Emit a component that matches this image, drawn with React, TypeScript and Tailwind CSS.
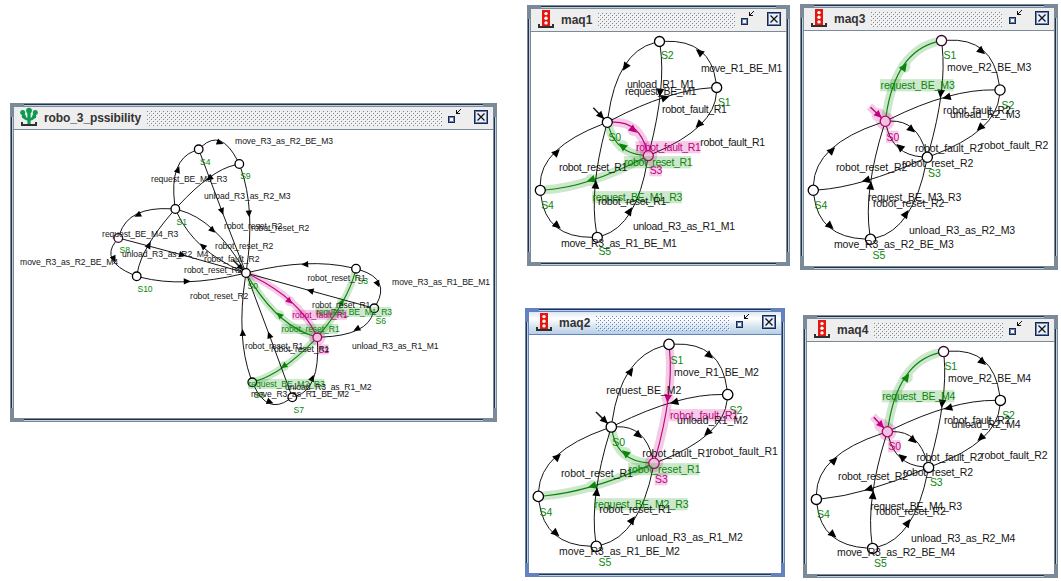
import React from "react";

type Tone = "plain" | "green" | "pink";
type Pt = [number, number];
type Edge = [from: string, to: string, midX: number, midY: number, tone?: Tone];
type Label = [text: string, x: number, y: number, tone?: Tone, width?: number];

interface Diagram {
  nodes: Record<string, Pt>;
  edges: Edge[];
  names: Label[];
  labels: Label[];
  tail: Pt;
  initial: string;
  initialTone?: Tone;
  nodeTones?: Record<string, "pink" | "dark">;
  size: number;
  tracking: number;
  radius: number;
}

const INK = { plain: "#161616", green: "#0a860a", pink: "#c4007f" };
const HAZE = { plain: "none", green: "#0b8a0b", pink: "#c8008c" };

function Arrow({ x, y, angle, tone, k }: { x: number; y: number; angle: number; tone: Tone; k: number }) {
  return (
    <path
      d={`M${3.4 * k} 0L${-3 * k} ${3 * k}L${-3 * k} ${-3 * k}Z`}
      fill={tone === "plain" ? "#000000" : INK[tone]}
      transform={`translate(${x} ${y}) rotate(${angle})`}
    />
  );
}

function trim(p: Pt, c: Pt, r: number): Pt {
  const d = Math.hypot(c[0] - p[0], c[1] - p[1]) || 1;
  return [p[0] + ((c[0] - p[0]) * r) / d, p[1] + ((c[1] - p[1]) * r) / d];
}

function Automaton({ d, view }: { d: Diagram; view: string }) {
  const k = d.size / 10.3;
  const curves = d.edges.map(([a, b, mx, my, tone = "plain"]) => {
    const s = d.nodes[a];
    const e = d.nodes[b];
    const c: Pt = [2 * mx - (s[0] + e[0]) / 2, 2 * my - (s[1] + e[1]) / 2];
    const s2 = trim(s, c, d.radius);
    const e2 = trim(e, c, d.radius);
    return {
      path: `M${s2[0]} ${s2[1]}Q${c[0]} ${c[1]} ${e2[0]} ${e2[1]}`,
      angle: (Math.atan2(e[1] - s[1], e[0] - s[0]) * 180) / Math.PI,
      mx,
      my,
      tone: tone as Tone,
    };
  });
  const home = d.nodes[d.initial];
  const tip = trim(home, d.tail, d.radius);
  const headAt = trim(home, d.tail, d.radius + 3.8 * k);
  const initTone = d.initialTone ?? "plain";
  const initAngle = (Math.atan2(home[1] - d.tail[1], home[0] - d.tail[0]) * 180) / Math.PI;

  const hazeBox = ([text, x, y, tone, w]: Label, i: number) =>
    tone && w ? (
      <rect key={text + i} x={x} y={y - 9.7 * k} width={w} height={12 * k} fill={HAZE[tone]} opacity={0.2} />
    ) : null;
  const word = ([text, x, y, tone = "plain"]: Label, i: number) => (
    <text key={text + i} x={x + 0.5} y={y} fill={INK[tone]}>
      {text}
    </text>
  );

  return (
    <svg
      viewBox={view}
      className="block h-full w-full"
      fontFamily="'Liberation Sans', Arial, sans-serif"
      fontSize={d.size}
      letterSpacing={d.tracking}
    >
      {(["green", "pink"] as const).map((tone) => (
        <g key={tone} opacity={0.2} stroke={HAZE[tone]} fill="none" strokeWidth={8.6 * k}>
          {curves
            .filter((c) => c.tone === tone)
            .map((c, i) => (
              <g key={i}>
                <path d={c.path} />
                <circle cx={c.mx} cy={c.my} r={6 * k} fill={HAZE[tone]} stroke="none" />
              </g>
            ))}
          {initTone === tone && (
            <>
              <path d={`M${d.tail[0] - 1} ${d.tail[1] - 1}L${tip[0]} ${tip[1]}`} strokeWidth={8} />
              <circle cx={headAt[0]} cy={headAt[1]} r={7} fill={HAZE[tone]} stroke="none" />
            </>
          )}
          {tone === "pink" &&
            Object.entries(d.nodeTones ?? {})
              .filter(([, t]) => t === "pink")
              .map(([n]) => (
                <circle key={n} cx={d.nodes[n][0]} cy={d.nodes[n][1]} r={d.radius + 4} fill={HAZE.pink} stroke="none" />
              ))}
        </g>
      ))}
      {curves.map((c, i) => (
        <g key={i}>
          <path d={c.path} fill="none" stroke={INK[c.tone]} strokeWidth={c.tone === "plain" ? 1 : 1.15} />
          <Arrow x={c.mx} y={c.my} angle={c.angle} tone={c.tone} k={k * 1.28} />
        </g>
      ))}
      <path d={`M${d.tail[0]} ${d.tail[1]}L${tip[0]} ${tip[1]}`} stroke={INK[initTone]} strokeWidth={1.5} />
      <Arrow x={headAt[0]} y={headAt[1]} angle={initAngle} tone={initTone} k={k * 1.2} />
      {Object.entries(d.nodes).map(([n, p]) => {
        const t = d.nodeTones?.[n];
        return (
          <circle
            key={n}
            cx={p[0]}
            cy={p[1]}
            r={d.radius}
            fill={t === "pink" ? "#eec3dd" : "#ffffff"}
            stroke={t === "pink" ? "#b4006f" : t === "dark" ? "#3a0a2c" : "#000000"}
            strokeWidth={1.3}
          />
        );
      })}
      {d.names.map(hazeBox)}
      {d.labels.map(hazeBox)}
      {d.names.map(([t, x, y, tone = "green", w], i) => word([t, x, y, tone, w], i))}
      {d.labels.map(word)}
    </svg>
  );
}

const robo: Diagram = {
  size: 8.6,
  tracking: -0.08,
  radius: 4.3,
  tail: [233, 260],
  initial: "S0",
  nodeTones: { S2: "pink", S8: "dark" },
  nodes: {
    S4: [198.7, 149.3], S9: [239.3, 164], S1: [175.3, 209], S8: [118.3, 238], S10: [136.7, 276.3],
    S0: [246, 273], S3: [356, 268.7], S6: [374.3, 308.3], S2: [317.3, 337.3], S5: [252.3, 382.3], S7: [292.3, 397.3],
  },
  edges: [
    ["S1", "S4", 178, 169.7], ["S4", "S9", 220, 142.7], ["S9", "S0", 249, 213.7], ["S4", "S0", 222, 211.3],
    ["S9", "S1", 209.3, 178.3], ["S1", "S8", 137.7, 215], ["S8", "S10", 114, 259], ["S10", "S1", 149, 245],
    ["S8", "S0", 182.3, 255], ["S10", "S0", 187, 281.3], ["S1", "S0", 212.7, 230.3], ["S0", "S1", 202.7, 246],
    ["S3", "S0", 305, 264.3], ["S3", "S6", 377.7, 284], ["S6", "S0", 310.3, 290.7], ["S6", "S2", 356.7, 329],
    ["S2", "S3", 342, 302, "green"], ["S0", "S2", 289.7, 301.3, "pink"], ["S2", "S0", 279.3, 315, "green"],
    ["S2", "S5", 283.7, 366.3, "green"], ["S5", "S0", 242.7, 332.7], ["S7", "S0", 269.3, 335],
    ["S5", "S7", 270, 402], ["S7", "S2", 312.3, 378],
  ],
  names: [
    ["S4", 199.5, 165], ["S9", 239.7, 179], ["S1", 176, 225], ["S8", 119, 253], ["S10", 137, 292], ["S0", 247, 289],
    ["S3", 357, 284], ["S6", 375, 324], ["S2", 318, 352.5, "pink", 10.6], ["S5", 253.5, 398], ["S7", 293, 413],
  ],
  labels: [
    ["move_R3_as_R2_BE_M3", 234.6, 144], ["request_BE_M3_R3", 150.6, 182], ["unload_R3_as_R2_M3", 203.6, 199],
    ["robot_reset_R2", 223.6, 229], ["robot_reset_R2", 250.6, 231], ["robot_reset_R2", 214.6, 249],
    ["robot_fault_R2", 203.6, 262], ["robot_reset_R2", 183.6, 273], ["robot_reset_R2", 189.6, 299],
    ["move_R3_as_R2_BE_M4", 19.6, 265], ["request_BE_M4_R3", 101.6, 237], ["unload_R3_as_R2_M4", 121.6, 257],
    ["robot_reset_R1", 307, 281], ["move_R3_as_R1_BE_M1", 391.6, 285], ["robot_reset_R1", 311.6, 308],
    ["request_BE_M1_R3", 315.4, 315, "green", 75.4], ["robot_fault_R1", 291.8, 318, "pink", 55],
    ["robot_reset_R1", 281, 332, "green", 57], ["unload_R3_as_R1_M1", 351.6, 349], ["robot_reset_R1", 244.6, 349],
    ["robot_reset_R1", 270.6, 352], ["request_BE_M2_R3", 248, 387, "green", 76.4],
    ["unload_R3_as_R1_M2", 284.6, 390], ["move_R3_as_R1_BE_M2", 250.6, 397],
  ],
};

const maq1: Diagram = {
  size: 10.5,
  tracking: -0.31,
  radius: 5,
  tail: [593.3, 107.7],
  initial: "S0",
  nodeTones: { S3: "pink" },
  nodes: {
    S2: [659.5, 41.5], S1: [716.7, 87.5], S0: [607.3, 122.3], S3: [648.3, 155.7], S4: [540.3, 190.3], S5: [597.3, 237.3],
  },
  edges: [
    ["S2", "S0", 625.3, 67], ["S1", "S2", 699.3, 52], ["S1", "S3", 698.7, 124.7], ["S4", "S0", 556.7, 152.3],
    ["S0", "S1", 665.3, 97.5], ["S2", "S3", 660, 92.5], ["S0", "S3", 633.5, 130, "pink"],
    ["S3", "S0", 622.3, 146, "green"], ["S3", "S4", 591, 180, "green"], ["S4", "S5", 557.3, 225.7],
    ["S5", "S0", 595.7, 184.7], ["S5", "S3", 629.7, 211],
  ],
  names: [
    ["S2", 660.6, 59], ["S1", 717.6, 106], ["S0", 608, 141], ["S3", 649.3, 174, "pink", 12.5], ["S4", 540.8, 209],
    ["S5", 598, 255],
  ],
  labels: [
    ["unload_R1_M1", 626.5, 88], ["request_BE_M1", 624.6, 95], ["move_R1_BE_M1", 700.4, 72],
    ["robot_fault_R1", 661.6, 113], ["robot_fault_R1", 699.8, 146], ["robot_fault_R1", 635.6, 151, "pink", 65],
    ["robot_reset_R1", 558.6, 171], ["robot_reset_R1", 623.8, 166, "green", 67.2],
    ["request_BE_M1_R3", 592, 201, "green", 90], ["robot_reset_R1", 597.6, 205],
    ["unload_R3_as_R1_M1", 632.4, 230], ["move_R3_as_R1_BE_M1", 560.6, 247],
  ],
};

const maq3: Diagram = {
  size: 10.5,
  tracking: -0.08,
  radius: 5.1,
  tail: [870.5, 107.3],
  initial: "S0",
  initialTone: "pink",
  nodeTones: { S0: "pink", S1: "dark" },
  nodes: {
    S1: [941.5, 40.6], S2: [1000, 90], S0: [885.3, 121.3], S3: [927.3, 157.3], S4: [813.3, 190.3], S5: [870.5, 239.3],
  },
  edges: [
    ["S0", "S1", 904.3, 66.7, "green"], ["S1", "S2", 981.7, 51.3], ["S2", "S0", 946.7, 97.3], ["S2", "S3", 980, 127.7],
    ["S1", "S3", 940.7, 93.7], ["S0", "S3", 911.7, 129.7], ["S3", "S0", 899.7, 147], ["S3", "S4", 866, 180.3],
    ["S4", "S5", 830.3, 226], ["S4", "S0", 832, 150.3], ["S5", "S0", 870.7, 185.7], ["S5", "S3", 906, 213.7],
  ],
  names: [
    ["S1", 943, 59], ["S2", 1001, 109], ["S0", 886, 140.5, "pink", 12.5], ["S3", 927.6, 177], ["S4", 814, 209],
    ["S5", 872, 259],
  ],
  labels: [
    ["request_BE_M3", 880, 89, "green", 73.4], ["move_R2_BE_M3", 946.6, 71], ["robot_fault_R2", 942.6, 114],
    ["unload_R2_M3", 949.6, 118], ["robot_fault_R2", 914.4, 152], ["robot_fault_R2", 980, 149],
    ["robot_reset_R2", 901.4, 167], ["robot_reset_R2", 835.4, 171], ["request_BE_M3_R3", 867.4, 201],
    ["robot_reset_R2", 872.4, 207], ["unload_R3_as_R2_M3", 908.6, 234], ["move_R3_as_R2_BE_M3", 833.4, 248],
  ],
};

const maq2: Diagram = {
  size: 10.5,
  tracking: -0.03,
  radius: 5.2,
  tail: [596, 412],
  initial: "S0",
  nodeTones: { S3: "pink" },
  nodes: {
    S1: [669, 344.4], S2: [727.7, 394.6], S0: [611.3, 427], S3: [654, 463.3], S4: [538.3, 496.4], S5: [596.3, 546.4],
  },
  edges: [
    ["S0", "S1", 630.7, 371.3], ["S1", "S2", 709.7, 355.7], ["S2", "S0", 674.3, 402.3], ["S2", "S3", 707.3, 432.7],
    ["S1", "S3", 667.7, 398.3, "pink"], ["S0", "S3", 638.7, 435.3], ["S3", "S0", 625.3, 453, "green"],
    ["S3", "S4", 592.3, 486, "green"], ["S4", "S5", 556, 533.3], ["S4", "S0", 557.7, 456.7],
    ["S5", "S0", 596.7, 492], ["S5", "S3", 632.3, 520],
  ],
  names: [
    ["S1", 670, 364], ["S2", 729, 413.5], ["S0", 611.8, 446], ["S3", 654.6, 483, "pink", 12.8], ["S4", 539, 516],
    ["S5", 598, 566],
  ],
  labels: [
    ["move_R1_BE_M2", 673.6, 376], ["request_BE_M2", 605.8, 394], ["robot_fault_R1", 669.4, 419, "pink", 68],
    ["unload_R1_M2", 676.6, 424], ["robot_fault_R1", 641.8, 457], ["robot_fault_R1", 708.8, 455],
    ["robot_reset_R1", 560.4, 477], ["robot_reset_R1", 628, 473, "green", 71],
    ["request_BE_M2_R3", 594, 508, "green", 93.6], ["robot_reset_R1", 598.8, 513],
    ["unload_R3_as_R1_M2", 635.4, 541], ["move_R3_as_R1_BE_M2", 558.6, 555],
  ],
};

const maq4: Diagram = {
  size: 10.5,
  tracking: -0.19,
  radius: 5.1,
  tail: [873.8, 417.3],
  initial: "S0",
  initialTone: "pink",
  nodeTones: { S0: "pink", S1: "dark" },
  nodes: {
    S1: [943.6, 351.6], S2: [1000.4, 400.4], S0: [887.4, 431.7], S3: [928.6, 467.4], S4: [816.4, 499.4], S5: [872.6, 548.4],
  },
  edges: [
    ["S0", "S1", 906.7, 377.3, "green"], ["S1", "S2", 982.7, 362], ["S2", "S0", 948.3, 408], ["S2", "S3", 980.7, 438],
    ["S1", "S3", 942, 403.7], ["S0", "S3", 913.3, 440.3], ["S3", "S0", 901.7, 457], ["S3", "S4", 868.7, 489],
    ["S4", "S5", 833, 534.7], ["S4", "S0", 834.3, 460.3], ["S5", "S0", 873, 495], ["S5", "S3", 907.7, 522.7],
  ],
  names: [
    ["S1", 944, 370], ["S2", 1001.8, 419], ["S0", 888, 450, "pink", 12.5], ["S3", 929.4, 486], ["S4", 816.6, 518],
    ["S5", 873.6, 567],
  ],
  labels: [
    ["move_R2_BE_M4", 947.6, 382], ["request_BE_M4", 881.8, 400, "green", 72.6], ["robot_fault_R2", 943.4, 424],
    ["unload_R2_M4", 951, 428], ["robot_fault_R2", 916, 461], ["robot_fault_R2", 980.6, 459],
    ["robot_reset_R2", 837.6, 480], ["robot_reset_R2", 902.6, 476], ["request_BE_M4_R3", 869.8, 510],
    ["robot_reset_R2", 875.4, 515], ["unload_R3_as_R2_M4", 910.6, 542], ["move_R3_as_R2_BE_M4", 836.6, 556],
  ],
};

function MachineIcon() {
  return (
    <svg className="h-[20px] w-[18px] shrink-0" viewBox="0 0 18 20">
      <path d="M1 15v4h16v-4h-2v2H3v-2z" fill="#303030" />
      <rect x="5" y="1" width="8" height="16" fill="#e8150f" />
      <circle cx="9" cy="4.600" r="1.700" fill="#fff" />
      <circle cx="9" cy="9.200" r="1.700" fill="#fff" />
      <circle cx="9" cy="13.900" r="1.700" fill="#fff" />
    </svg>
  );
}

function TreeIcon() {
  return (
    <svg className="h-[20px] w-[18px] shrink-0" viewBox="0 0 18 20">
      <path d="M1 15v4h16v-4h-2v2H3v-2z" fill="#303030" />
      <g fill="#0b9a50">
        <circle cx="9" cy="3.600" r="2.900" />
        <circle cx="2.700" cy="5.600" r="2.500" />
        <circle cx="15.300" cy="5.600" r="2.500" />
        <circle cx="3.800" cy="9.400" r="2.100" />
        <circle cx="14.200" cy="9.400" r="2.100" />
        <path d="M7.400 4h3.200v13H7.400z" />
      </g>
      <path d="M3 6.500c.6 4.600 2.500 5.700 6 5.900 3.500-.2 5.400-1.300 6-5.900" fill="none" stroke="#0b9a50" strokeWidth="2.800" />
    </svg>
  );
}

function RestoreIcon() {
  return (
    <svg className="h-[14px] w-[14px] shrink-0" viewBox="0 0 14 14" shapeRendering="crispEdges">
      <rect x="0" y="7" width="7" height="7" fill="#1e2a44" />
      <rect x="1" y="8" width="5" height="5" fill="#6382bf" />
      <rect x="2" y="9" width="3" height="3" fill="#f4f7fc" />
      <path d="M8 1h1v3h3v1H8zM9 3h1v1H9zM10 2h1v1h-1zM11 1h1v1h-1zM12 0h1v1h-1z" fill="#111" />
    </svg>
  );
}

function CloseIcon() {
  return (
    <svg className="h-[14px] w-[14px] shrink-0" viewBox="0 0 14 14">
      <rect x="0.500" y="0.500" width="13" height="13" fill="#e9f0fa" stroke="#1c2740" />
      <rect x="1.500" y="1.500" width="11" height="11" fill="none" stroke="#6382bf" />
      <path d="M3.500 3.500l7 7M10.500 3.500l-7 7" stroke="#151515" strokeWidth="1.300" />
    </svg>
  );
}

interface FrameProps {
  title: string;
  frame: string;
  view: string;
  diagram: Diagram;
  active?: boolean;
  tree?: boolean;
}

function Frame({ title, frame, view, diagram, active, tree }: FrameProps) {
  const id = `bumps-${title}`;
  const dot = active ? "#6382bf" : "#7a8a99";
  return (
    <section className={`absolute p-1 ${frame} ${active ? "bg-[#6382bf]" : "bg-[#7a8a99]"}`}>
      <i className="absolute top-px right-[14px] left-[14px] h-[2px] border-t border-[#26323e] bg-[#b8cfe5]" />
      <i className="absolute right-[14px] bottom-px left-[14px] h-[2px] border-t border-[#26323e] bg-[#b8cfe5]" />
      <i className="absolute top-[14px] bottom-[14px] left-px w-[2px] border-l border-[#26323e] bg-[#b8cfe5]" />
      <i className="absolute top-[14px] right-px bottom-[14px] w-[2px] border-l border-[#26323e] bg-[#b8cfe5]" />
      <div className="relative flex h-full flex-col bg-white">
        <header
          className={`flex h-[23px] shrink-0 items-start border-b pr-[5px] pl-[6px] ${
            active
              ? "border-[#6382bf] bg-[linear-gradient(#dde8f3,#ffffff_30%,#dde8f3_60%,#b8cfe5)]"
              : "border-[#7a8a99] bg-[#eeeeee]"
          }`}
        >
          {tree ? <TreeIcon /> : <MachineIcon />}
          <h2
            className={`ml-[6px] shrink-0 font-['Liberation_Sans',Arial,sans-serif] text-[12px] leading-[23px] font-bold whitespace-nowrap text-[#333] ${
              tree ? "w-[98px] tracking-[-0.1px]" : "w-[32px]"
            }`}
          >
            {title}
          </h2>
          <svg className="mt-1 mr-[6px] ml-[5px] h-[15px] min-w-0 flex-1" shapeRendering="crispEdges">
            <defs>
              <pattern id={id} width="4" height="4" patternUnits="userSpaceOnUse">
                <rect width="1" height="1" fill={dot} />
                <rect x="2" y="2" width="1" height="1" fill={dot} />
                <rect x="1" y="1" width="1" height="1" fill="#fff" />
                <rect x="3" y="3" width="1" height="1" fill="#fff" />
              </pattern>
            </defs>
            <rect width="100%" height="100%" fill={`url(#${id})`} />
          </svg>
          <div className="flex gap-[12px] pt-[2px]">
            <RestoreIcon />
            <div className="pt-px">
              <CloseIcon />
            </div>
          </div>
        </header>
        <div className="min-h-0 flex-1">
          <Automaton d={diagram} view={view} />
        </div>
      </div>
    </section>
  );
}

export default function App() {
  return (
    <main className="relative h-[581px] w-[1061px] overflow-hidden bg-white">
      <Frame title="robo_3_pssibility" frame="left-[10px] top-[103px] h-[319px] w-[487px]" view="14 130 479 288" diagram={robo} tree />
      <Frame title="maq1" frame="left-[527px] top-[5px] h-[261px] w-[263px]" view="531 32 255 230" diagram={maq1} />
      <Frame title="maq3" frame="left-[800px] top-[4px] h-[266px] w-[258px]" view="804 31 250 235" diagram={maq3} />
      <Frame title="maq2" frame="left-[525px] top-[308px] h-[269px] w-[260px]" view="529 335 252 238" diagram={maq2} active />
      <Frame title="maq4" frame="left-[803px] top-[315px] h-[263px] w-[255px]" view="807 342 247 232" diagram={maq4} />
    </main>
  );
}
